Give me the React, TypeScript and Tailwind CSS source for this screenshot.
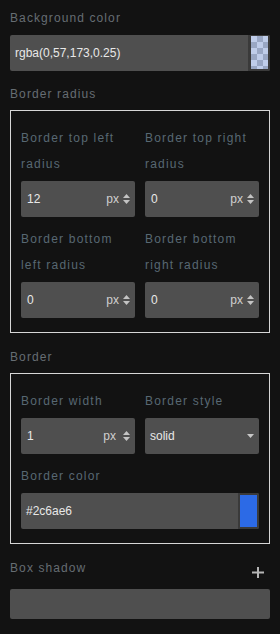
import React from "react";

const font = { fontFamily: '"Liberation Sans", Arial, sans-serif' };

function Arrows() {
  return (
    <svg width="7" height="10" viewBox="0 0 7 10" className="shrink-0">
      <path d="M3.5 0 L7 4 L0 4 Z" fill="#c4c4c4" />
      <path d="M0 6 L7 6 L3.5 10 Z" fill="#c4c4c4" />
    </svg>
  );
}

function NumInput({ value, wide }: { value: string; wide?: boolean }) {
  return (
    <div className="h-[36px] flex items-center rounded-[2px] bg-[#4f4f4f] pl-[6px] pr-[5px]">
      <span className="flex-1 text-[12px] text-[#e8e8e8]">{value}</span>
      <span className={`text-[12px] text-[#cfcfcf] ${wide ? "mr-[7px]" : "mr-[4px]"}`}>px</span>
      <Arrows />
    </div>
  );
}

function InnerLabel({ lines }: { lines: string[] }) {
  return (
    <div className="text-[12px] leading-[26px] tracking-[1.2px] text-[#586873] whitespace-nowrap">
      {lines.map((l) => (
        <div key={l}>{l}</div>
      ))}
    </div>
  );
}

function SectionLabel({ children }: { children: React.ReactNode }) {
  return (
    <div className="h-[20px] leading-[20px] text-[12px] tracking-[1.1px] text-[#666d73]">
      {children}
    </div>
  );
}

export default function App() {
  return (
    <div style={font} className="w-[280px] h-[634px] bg-[#121212] px-[10px] pt-[8px] overflow-hidden">
      {/* Background color */}
      <SectionLabel>Background color</SectionLabel>
      <div className="mt-[7px] h-[36px] flex rounded-[2px] bg-[#4f4f4f]">
        <div className="flex-1 flex items-center pl-[5px] text-[12px] text-[#e8e8e8]">
          rgba(0,57,173,0.25)
        </div>
        <div className="w-[22px] h-[36px] bg-[#3a3a3a] rounded-r-[2px] pl-[3px] pr-[2px] pt-[1px] pb-[2px]">
          <div className="w-full h-full bg-[repeating-conic-gradient(#cccccc_0%_25%,#ffffff_0%_50%)] bg-[length:12px_12px]">
            <div className="w-full h-full bg-[rgba(0,57,173,0.25)]" />
          </div>
        </div>
      </div>

      {/* Border radius */}
      <div className="mt-[13px]">
        <SectionLabel>Border radius</SectionLabel>
      </div>
      <div className="mt-[6px] border border-[#d6d6d6] px-[10px] pt-[14px] pb-[14px]">
        <div className="grid grid-cols-2 gap-x-[10px] gap-y-[9px]">
          <div>
            <InnerLabel lines={["Border top left", "radius"]} />
            <div className="mt-[4px]">
              <NumInput value="12" />
            </div>
          </div>
          <div>
            <InnerLabel lines={["Border top right", "radius"]} />
            <div className="mt-[4px]">
              <NumInput value="0" />
            </div>
          </div>
          <div>
            <InnerLabel lines={["Border bottom", "left radius"]} />
            <div className="mt-[4px]">
              <NumInput value="0" />
            </div>
          </div>
          <div>
            <InnerLabel lines={["Border bottom", "right radius"]} />
            <div className="mt-[4px]">
              <NumInput value="0" />
            </div>
          </div>
        </div>
      </div>

      {/* Border */}
      <div className="mt-[14px]">
        <SectionLabel>Border</SectionLabel>
      </div>
      <div className="mt-[6px] border border-[#d6d6d6] px-[10px] pt-[14px] pb-[14px]">
        <div className="grid grid-cols-2 gap-x-[10px]">
          <div>
            <InnerLabel lines={["Border width"]} />
            <div className="mt-[4px]">
              <NumInput value="1" wide />
            </div>
          </div>
          <div>
            <InnerLabel lines={["Border style"]} />
            <div className="mt-[4px] h-[36px] flex items-center rounded-[2px] bg-[#4f4f4f] pl-[5px] pr-[5px]">
              <span className="flex-1 text-[12px] text-[#e8e8e8]">solid</span>
              <svg width="7" height="4" viewBox="0 0 7 4">
                <path d="M0 0 L7 0 L3.5 4 Z" fill="#c8c8c8" />
              </svg>
            </div>
          </div>
        </div>
        <div className="mt-[9px]">
          <InnerLabel lines={["Border color"]} />
          <div className="mt-[4px] h-[36px] flex rounded-[2px] bg-[#4f4f4f]">
            <div className="flex-1 flex items-center pl-[5px] text-[12px] text-[#e8e8e8]">#2c6ae6</div>
            <div className="w-[21px] h-[36px] bg-[#3a3a3a] rounded-r-[2px] pl-[2px] pr-[2px] pt-[2px] pb-[2px]">
              <div className="w-full h-full bg-[#2c6ae6]" />
            </div>
          </div>
        </div>
      </div>

      {/* Box shadow */}
      <div className="mt-[14px] flex justify-between">
        <SectionLabel>Box shadow</SectionLabel>
        <svg width="12" height="11" viewBox="0 0 12 11" className="mt-[9px] mr-[6px]">
          <rect x="0" y="4.5" width="12" height="2" fill="#b5b5b5" />
          <rect x="5" y="0" width="2" height="11" fill="#b5b5b5" />
        </svg>
      </div>
      <div className="mt-[11px] h-[30px] rounded-[2px] bg-[#4f4f4f]" />
    </div>
  );
}
